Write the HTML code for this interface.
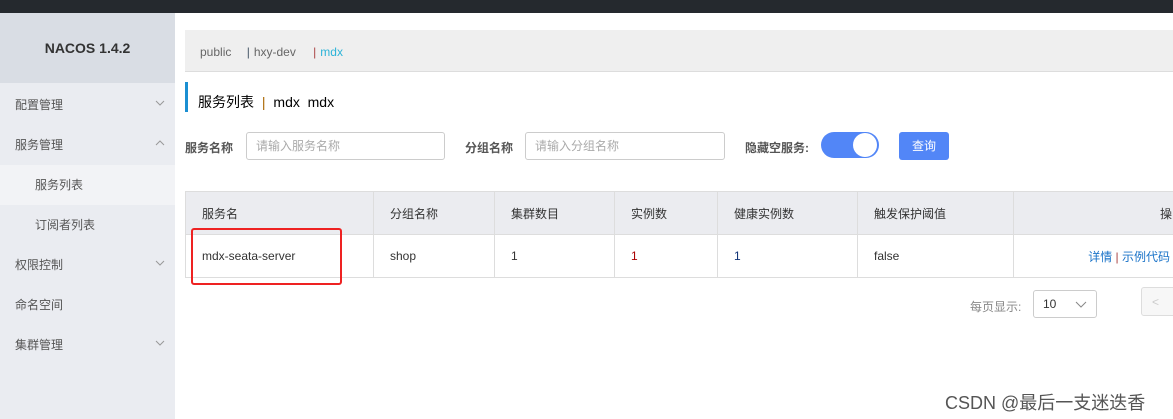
<!DOCTYPE html>
<html><head><meta charset="utf-8"><style>
*{margin:0;padding:0;box-sizing:border-box}
body{width:1173px;height:419px;overflow:hidden;background:#fff;font-family:"Liberation Sans","Noto Sans CJK SC",sans-serif;font-size:12px;color:#333;position:relative}
.a{position:absolute}
.top{left:0;top:0;width:1173px;height:13px;background:#25292e}
.side{left:0;top:13px;width:175px;height:406px;background:#eaecf1}
.logo{left:0;top:13px;width:175px;height:70px;background:#d9dde4;font-weight:bold;font-size:14px;color:#333;text-align:center;line-height:70px}
.mi{left:0;width:175px;height:40px;line-height:40px;padding-left:15px;color:#555;font-size:12px}
.chev{position:absolute;right:10px;top:15px}
.tabs{left:185px;top:30px;width:988px;height:42px;background:#efefef;border-bottom:1px solid #ddd;line-height:44px;font-size:12px;color:#666;padding-left:15px}
.bar{left:185px;top:82px;width:3px;height:30px;background:#1b8fd2}
.inp{height:28px;border:1px solid #ccc;border-radius:3px;color:#aaa;padding-left:9px;line-height:26px;font-size:12px}
.lbl{font-weight:bold;color:#555;font-size:12px}
table{border-collapse:collapse;font-size:12px}
td{border:1px solid #ddd;padding-left:16px;color:#333}
</style></head><body>
<div class="a top"></div>
<div class="a side"></div>
<div class="a logo">NACOS 1.4.2</div>
<div class="a mi" style="top:85px">配置管理<svg class="chev" width="10" height="6"><path d="M1 1l4 4 4-4" fill="none" stroke="#999"/></svg></div>
<div class="a mi" style="top:125px">服务管理<svg class="chev" width="10" height="6"><path d="M1 5l4-4 4 4" fill="none" stroke="#999"/></svg></div>
<div class="a mi" style="top:165px;background:#f2f3f6;padding-left:35px">服务列表</div>
<div class="a mi" style="top:205px;padding-left:35px">订阅者列表</div>
<div class="a mi" style="top:245px">权限控制<svg class="chev" width="10" height="6"><path d="M1 1l4 4 4-4" fill="none" stroke="#999"/></svg></div>
<div class="a mi" style="top:285px">命名空间</div>
<div class="a mi" style="top:325px">集群管理<svg class="chev" width="10" height="6"><path d="M1 1l4 4 4-4" fill="none" stroke="#999"/></svg></div>
<div class="a tabs">public <span style="margin-left:12px;margin-right:4px;color:#456">|</span>hxy-dev <span style="margin-left:14px;margin-right:4px;color:#a44">|</span><span style="color:#2cb3d8">mdx</span></div>
<div class="a bar"></div>
<div class="a" style="left:198px;top:92px;font-size:14px;color:#000">服务列表 <span style="color:#a60;margin:0 4px">|</span> mdx&nbsp; mdx</div>
<div class="a lbl" style="left:185px;top:139px">服务名称</div>
<div class="a inp" style="left:246px;top:132px;width:199px">请输入服务名称</div>
<div class="a lbl" style="left:465px;top:139px">分组名称</div>
<div class="a inp" style="left:525px;top:132px;width:200px">请输入分组名称</div>
<div class="a lbl" style="left:745px;top:139px">隐藏空服务:</div>
<div class="a" style="left:821px;top:132px;width:58px;height:26px;border-radius:13px;background:#5286f7"><div style="position:absolute;right:2px;top:1px;width:24px;height:24px;border-radius:50%;background:#fff"></div></div>
<div class="a" style="left:899px;top:132px;width:50px;height:28px;border-radius:3px;background:#5286f7;color:#fff;text-align:center;line-height:28px">查询</div>
<table class="a" style="left:185px;top:191px;width:1000px">
<tr style="height:43px;background:#ebecf0;color:#333"><td style="width:188px">服务名</td><td style="width:121px">分组名称</td><td style="width:120px">集群数目</td><td style="width:103px">实例数</td><td style="width:140px">健康实例数</td><td style="width:156px">触发保护阈值</td><td style="text-align:right;padding-right:12px">操</td></tr>
<tr style="height:43px"><td>mdx-seata-server</td><td>shop</td><td>1</td><td style="color:#a00">1</td><td style="color:#137">1</td><td>false</td><td style="text-align:right;padding-right:14px;color:#1a73c8">详情 <span style="color:#a44">|</span> 示例代码</td></tr>
</table>
<div class="a" style="left:191px;top:228px;width:151px;height:57px;border:2px solid #e22;border-radius:3px"></div>
<div class="a" style="left:970px;top:298px;color:#888">每页显示:</div>
<div class="a" style="left:1033px;top:290px;width:64px;height:28px;border:1px solid #ccc;border-radius:3px;padding-left:9px;line-height:26px;color:#333">10<svg style="position:absolute;right:9px;top:10px" width="12" height="7"><path d="M1 1l5 5 5-5" fill="none" stroke="#888"/></svg></div>
<div class="a" style="left:1141px;top:287px;width:40px;height:29px;border:1px solid #ddd;border-radius:3px;background:#f7f7f7;color:#ccc;padding-left:10px;line-height:28px">&lt;</div>
<div class="a" style="left:945px;top:389px;font-size:18px;color:#555">CSDN @最后一支迷迭香</div>
</body></html>
